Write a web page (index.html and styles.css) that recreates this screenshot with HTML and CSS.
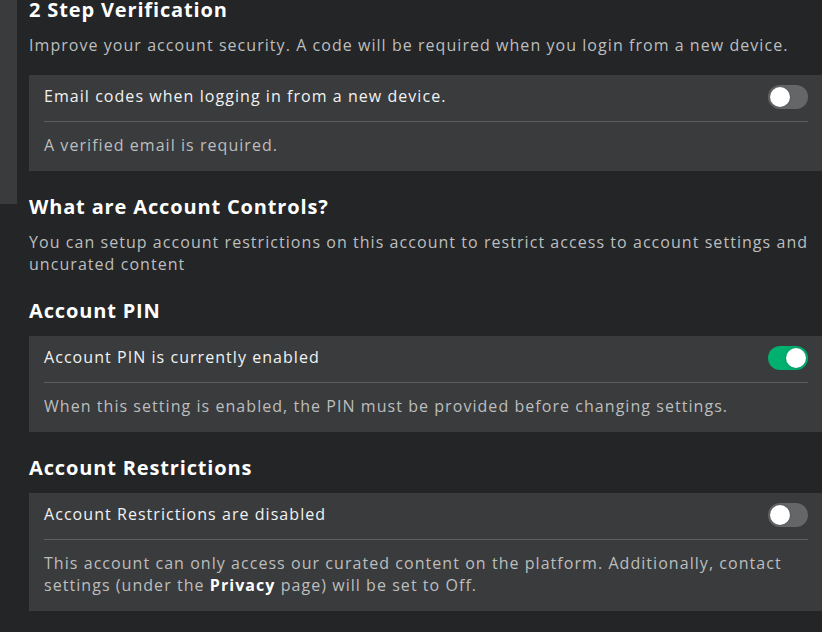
FILE: index.html
```html
<!DOCTYPE html>
<html lang="en">
<head>
<meta charset="utf-8">
<title>Account Settings</title>
<link rel="stylesheet" href="styles.css">
</head>
<body>
<div class="page">
  <aside class="rail"></aside>
  <main class="content">
    <section class="block">
      <h2 class="heading">2 Step Verification</h2>
      <p class="sub sub-before-card">Improve your account security. A code will be required when you login from a new device.</p>
      <div class="card">
        <div class="card-row">
          <span class="row-label">Email codes when logging in from a new device.</span>
          <span class="toggle"><span class="knob"></span></span>
        </div>
        <p class="card-desc">A verified email is required.</p>
      </div>
    </section>
    <section class="block">
      <h2 class="heading">What are Account Controls?</h2>
      <p class="sub">You can setup account restrictions on this account to restrict access to account settings and uncurated content</p>
    </section>
    <section class="block">
      <h2 class="heading heading-card">Account PIN</h2>
      <div class="card">
        <div class="card-row">
          <span class="row-label">Account PIN is currently enabled</span>
          <span class="toggle on"><span class="knob"></span></span>
        </div>
        <p class="card-desc">When this setting is enabled, the PIN must be provided before changing settings.</p>
      </div>
    </section>
    <section class="block">
      <h2 class="heading heading-card">Account Restrictions</h2>
      <div class="card">
        <div class="card-row">
          <span class="row-label">Account Restrictions are disabled</span>
          <span class="toggle"><span class="knob"></span></span>
        </div>
        <p class="card-desc">This account can only access our curated content on the platform. Additionally, contact settings (under the <strong class="em">Privacy</strong> page) will be set to Off.</p>
      </div>
    </section>
  </main>
</div>
</body>
</html>
```

FILE: styles.css
```css
* { box-sizing: border-box; }
html, body {
  margin: 0;
  padding: 0;
  background: #232527;
  height: 100%;
  overflow: hidden;
}
body {
  font-family: "Open Sans", "Liberation Sans", sans-serif;
  color: #bdbebe;
  font-size: 16px;
  letter-spacing: 1.05px;
}
.page {
  display: flex;
  align-items: flex-start;
}
.rail {
  flex: 0 0 17px;
  height: 204px;
  background: #393b3d;
}
.content {
  flex: 1;
  margin-left: 12px;
  margin-top: -4px;
}
.block { margin-bottom: 22px; }
.heading {
  margin: 0 0 10px;
  font-size: 20px;
  line-height: 28px;
  font-weight: 700;
  color: #ffffff;
  letter-spacing: 0.85px;
}
.heading-card { margin-bottom: 11px; }
.sub {
  margin: 0;
  line-height: 22px;
  color: #bdbebe;
  padding-right: 10px;
}
.sub-before-card { margin-bottom: 19px; }
.card {
  background: #393b3d;
  padding: 0 14px 0 15px;
}
.card-row {
  display: flex;
  align-items: center;
  justify-content: space-between;
  height: 47px;
  padding: 10px 0 12px;
  border-bottom: 1px solid #5c5e60;
}
.row-label {
  color: #f2f2f2;
  line-height: 20px;
  padding-bottom: 3px;
}
.toggle {
  position: relative;
  width: 40px;
  height: 24px;
  border-radius: 12px;
  background: #656668;
  flex: none;
}
.toggle .knob {
  position: absolute;
  top: 2px;
  left: 2px;
  width: 20px;
  height: 20px;
  border-radius: 50%;
  background: #ffffff;
  box-shadow: 0 0 2px rgba(0,0,0,0.35);
}
.toggle.on { background: #00b06f; }
.toggle.on .knob { left: 18px; }
.card-desc {
  margin: 0;
  padding: 12px 0 15px;
  line-height: 22px;
  color: #bdbebe;
}
.em { color: #ffffff; font-weight: 700; }
```
